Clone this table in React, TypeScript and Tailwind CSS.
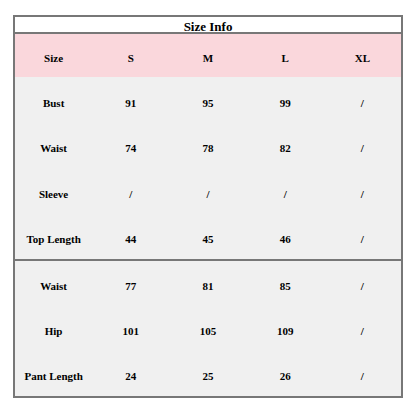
const header = ['Size', 'S', 'M', 'L', 'XL'];

const top = [
  ['Bust', '91', '95', '99', '/'],
  ['Waist', '74', '78', '82', '/'],
  ['Sleeve', '/', '/', '/', '/'],
  ['Top Length', '44', '45', '46', '/'],
];

const bottom = [
  ['Waist', '77', '81', '85', '/'],
  ['Hip', '101', '105', '109', '/'],
  ['Pant Length', '24', '25', '26', '/'],
];

function Row({ cells, h }: { cells: string[]; h: string }) {
  return (
    <div className={`grid grid-cols-5 ${h}`}>
      {cells.map((c, i) => (
        <div key={i} className="flex items-center justify-center pt-[6px]">
          {c}
        </div>
      ))}
    </div>
  );
}

export default function App() {
  return (
    <div className="h-[416px] w-[416px] bg-white pl-[13px] pt-[15px] font-['Liberation_Serif',serif] text-[11px] font-bold text-black">
      <div className="w-[390px] border-2 border-[#777777]">
        <div className="flex h-[17px] items-center justify-center border-b-2 border-[#777777] bg-white pt-[3px] text-[13px] leading-none">
          Size Info
        </div>
        <div className="bg-[#fad7dc]">
          <Row cells={header} h="h-[43px]" />
        </div>
        <div className="bg-[#f0f0f0]">
          {top.map((r, i) => (
            <Row key={i} cells={r} h="h-[45.5px]" />
          ))}
        </div>
        <div className="border-t-2 border-[#777777] bg-[#f0f0f0]">
          {bottom.map((r, i) => (
            <Row key={i} cells={r} h="h-[45px]" />
          ))}
        </div>
      </div>
    </div>
  );
}
